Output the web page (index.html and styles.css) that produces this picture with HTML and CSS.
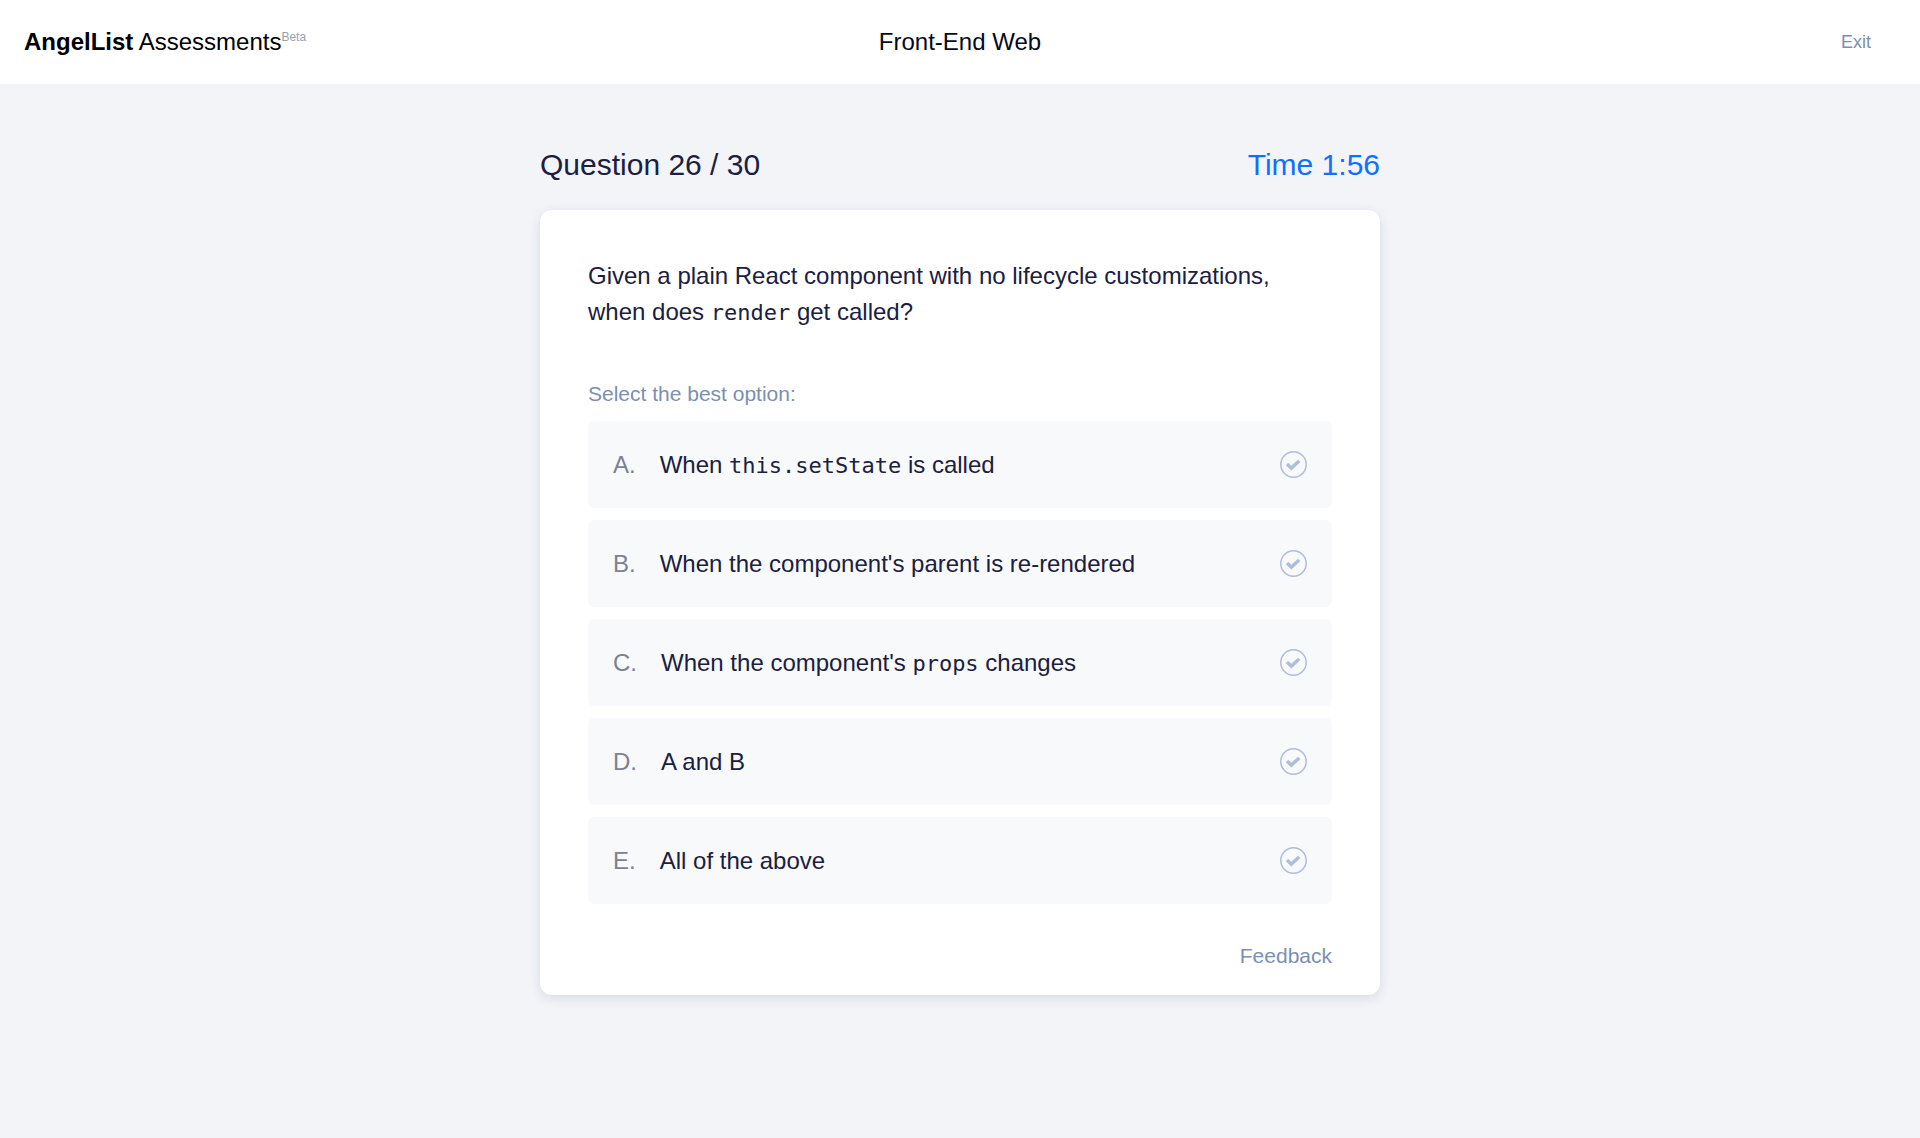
FILE: index.html
```html
<!DOCTYPE html>
<html lang="en">
<head>
<meta charset="utf-8">
<meta name="viewport" content="width=device-width, initial-scale=1">
<title>Front-End Web – AngelList Assessments</title>
<link rel="stylesheet" href="styles.css">
</head>
<body>
<svg class="sprite" aria-hidden="true">
  <symbol id="check" viewBox="0 0 27 27">
    <circle cx="13.5" cy="13.5" r="12.7" fill="none" stroke="currentColor" stroke-width="1.5"/>
    <path d="M6.1 14.2 8.2 12.1 11.3 15 18.1 9 20.2 11.1 11.3 19.2Z" fill="currentColor" stroke="currentColor" stroke-width=".5" stroke-linejoin="round"/>
  </symbol>
</svg>
<header class="topbar">
  <div class="brand"><strong>AngelList</strong> Assessments<sup class="beta">Beta</sup></div>
  <h1 class="test-name">Front-End Web</h1>
  <a class="exit" href="#">Exit</a>
</header>
<main class="assessment">
  <div class="status">
    <h2 class="progress">Question 26 / 30</h2>
    <div class="timer">Time 1:56</div>
  </div>
  <form class="card">
    <p class="question">Given a plain React component with no lifecycle customizations, when does <code>render</code> get called?</p>
    <fieldset class="options">
      <legend class="hint">Select the best option:</legend>
      <label class="option">
        <input class="choice" type="radio" name="answer" value="a">
        <span class="letter">A.</span>
        <span class="text">When <code>this.setState</code> is called</span>
        <svg class="check" aria-hidden="true"><use href="#check"/></svg>
      </label>
      <label class="option">
        <input class="choice" type="radio" name="answer" value="b">
        <span class="letter">B.</span>
        <span class="text">When the component's parent is re-rendered</span>
        <svg class="check" aria-hidden="true"><use href="#check"/></svg>
      </label>
      <label class="option">
        <input class="choice" type="radio" name="answer" value="c">
        <span class="letter">C.</span>
        <span class="text">When the component's <code>props</code> changes</span>
        <svg class="check" aria-hidden="true"><use href="#check"/></svg>
      </label>
      <label class="option">
        <input class="choice" type="radio" name="answer" value="d">
        <span class="letter">D.</span>
        <span class="text">A and B</span>
        <svg class="check" aria-hidden="true"><use href="#check"/></svg>
      </label>
      <label class="option">
        <input class="choice" type="radio" name="answer" value="e">
        <span class="letter">E.</span>
        <span class="text">All of the above</span>
        <svg class="check" aria-hidden="true"><use href="#check"/></svg>
      </label>
    </fieldset>
    <a class="feedback" href="#">Feedback</a>
  </form>
</main>
</body>
</html>
```
FILE: styles.css
```css
* {
  box-sizing: border-box;
}

body {
  margin: 0;
  background: #f2f4f8;
  color: #1b2040;
  font-family: "Liberation Sans", Arial, sans-serif;
  font-size: 24px;
  line-height: 36px;
}

h1,
h2,
p {
  margin: 0;
  font-size: inherit;
  font-weight: 400;
}

a {
  color: #7b8fb4;
  text-decoration: none;
}

a:hover {
  text-decoration: underline;
}

code {
  font-family: "DejaVu Sans Mono", monospace;
  font-size: 22px;
  line-height: 1;
}

.sprite {
  display: none;
}

.topbar {
  display: grid;
  grid-template-columns: 1fr auto 1fr;
  align-items: center;
  min-height: 84px;
  padding: 0 24px;
  column-gap: 24px;
  background: #fff;
}

.brand {
  color: #000;
}

.beta {
  color: #9a9fb0;
  font-size: 12px;
  line-height: 0;
}

.test-name {
  color: #050a20;
}

.exit {
  justify-self: end;
  padding: 0 25px;
  font-size: 18px;
}

.assessment {
  max-width: 840px;
  margin: 0 auto;
  padding: 60px 0;
}

.status {
  display: flex;
  justify-content: space-between;
  margin-bottom: 24px;
  font-size: 30px;
  line-height: 42px;
}

.timer {
  color: #0f6fff;
}

.card {
  display: flex;
  flex-direction: column;
  padding: 48px 48px 24px;
  border-radius: 12px;
  background: #fff;
  box-shadow: 0 3px 12px rgba(30, 50, 70, 0.13);
}

.options {
  display: flex;
  flex-direction: column;
  gap: 12px;
  min-width: 0;
  margin: 48px 0 36px;
  padding: 0;
  border: 0;
}

.hint {
  margin-bottom: 12px;
  padding: 0;
  color: #7b8fb4;
  font-size: 21px;
  line-height: 31px;
}

.option {
  position: relative;
  display: flex;
  align-items: center;
  gap: 24px;
  min-height: 87px;
  padding: 24px;
  border: 1px solid transparent;
  border-radius: 6px;
  background: #f8f9fb;
  cursor: pointer;
}

.choice {
  position: absolute;
  inset: 0;
  width: 100%;
  height: 100%;
  margin: 0;
  opacity: 0;
  cursor: pointer;
}

.option:focus-within {
  border-color: #0f6fff;
}

.letter {
  color: #7d8190;
}

.text {
  flex: 1;
}

.check {
  flex: none;
  width: 27px;
  height: 27px;
  color: #adbdda;
}

.choice:checked ~ .check {
  color: #0f6fff;
}

.feedback {
  align-self: flex-end;
  font-size: 21px;
  line-height: 31px;
}
```
